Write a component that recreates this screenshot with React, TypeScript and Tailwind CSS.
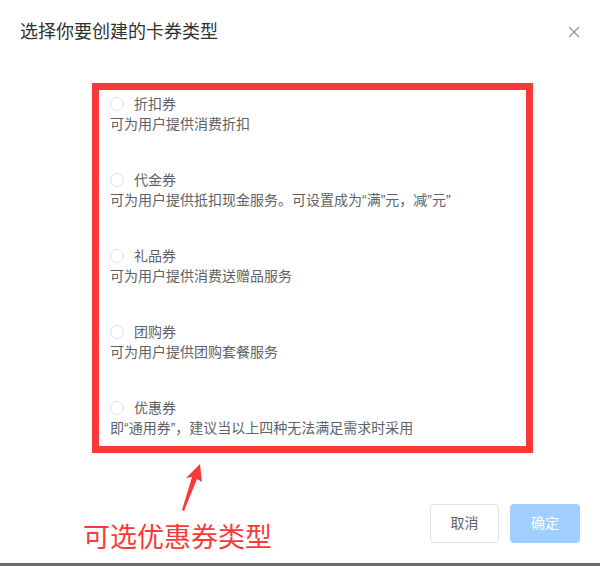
const types = [
  { label: "折扣券", desc: "可为用户提供消费折扣" },
  { label: "代金券", desc: "可为用户提供抵扣现金服务。可设置成为“满”元，减”元”" },
  { label: "礼品券", desc: "可为用户提供消费送赠品服务" },
  { label: "团购券", desc: "可为用户提供团购套餐服务" },
  { label: "优惠券", desc: "即“通用券”，建议当以上四种无法满足需求时采用" },
];

function CloseIcon() {
  return (
    <svg width="12" height="12" viewBox="0 0 12 12" className="block">
      <path d="M1 1L11 11M11 1L1 11" stroke="#909399" strokeWidth="1.1" fill="none" />
    </svg>
  );
}

export default function App() {
  return (
    <div
      className="relative flex h-[566px] w-[600px] flex-col bg-white text-[#606266]"
      style={{ fontFamily: '"Liberation Sans", "Noto Sans CJK SC", sans-serif' }}
    >
      <div className="flex flex-1 flex-col">
        {/* header */}
        <div className="flex h-[54px] items-start justify-between px-5 pt-5">
          <h1 className="text-[18px] leading-6 text-[#303133]">选择你要创建的卡券类型</h1>
          <button className="mt-[6px] cursor-pointer">
            <CloseIcon />
          </button>
        </div>

        {/* body */}
        <div className="pl-[92px] pt-[29px]">
          <div className="h-[370px] w-[441px] border-[7px] border-[#fa3a3a] pl-[11px] pt-[4px]">
            {types.map((t, i) => (
              <div key={t.label} className={i > 0 ? "mt-[36px]" : ""}>
                <label className="flex h-5 cursor-pointer items-center gap-[10px] text-[14px] leading-5">
                  <span className="h-[14px] w-[14px] rounded-full border border-[#dcdfe6] bg-white" />
                  <span>{t.label}</span>
                </label>
                <p className="h-5 text-[14px] leading-5">{t.desc}</p>
              </div>
            ))}
          </div>
        </div>

        {/* footer */}
        <div className="mt-[51px] flex justify-end gap-[11px] pr-5">
          <button className="h-[39px] w-[69px] rounded-[4px] border border-[#dcdfe6] bg-white text-[14px] text-[#606266]">
            取消
          </button>
          <button className="h-[39px] w-[70px] cursor-not-allowed rounded-[4px] bg-[#a0cfff] text-[14px] text-white">
            确定
          </button>
        </div>
      </div>

      <div className="h-[3px] bg-[#6b6b6b]" />

      {/* annotation */}
      <svg className="absolute left-0 top-0" width="600" height="566" viewBox="0 0 600 566">
        <polygon
          points="200,464 202,482 197,479 184,511 182,510 192,477 186,478"
          fill="#fa3a3a"
        />
      </svg>
      <span className="absolute left-[83px] top-[522px] text-[27px] leading-[32px] text-[#fa3a3a]">
        可选优惠券类型
      </span>
    </div>
  );
}
